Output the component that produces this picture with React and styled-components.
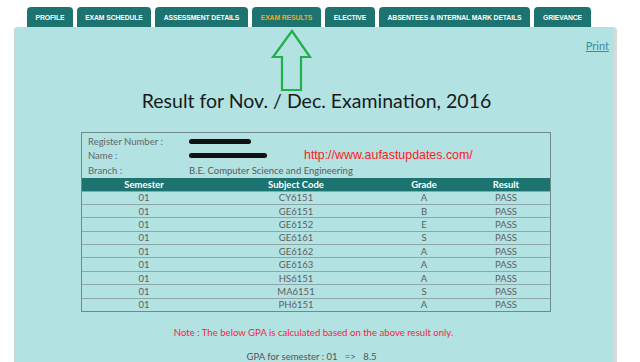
import React from "react";
import styled, { createGlobalStyle } from "styled-components";

const GlobalStyle = createGlobalStyle`
  body {
    margin: 0;
    background: #ffffff;
    font-family: "Lato", "Liberation Sans", sans-serif;
  }
`;

const Page = styled.div`
  width: 640px;
  height: 362px;
  overflow: hidden;
  padding-top: 7px;
  box-sizing: border-box;
`;

const TabBar = styled.div`
  display: flex;
  gap: 4px;
  padding-left: 27px;
  height: 20px;
`;

const Tab = styled.div`
  display: flex;
  align-items: center;
  justify-content: center;
  width: ${(props) => props.w}px;
  background: #1c7370;
  border-radius: 4px 4px 0 0;
  color: ${(props) => (props.active ? "#f5a623" : "#ffffff")};
  font-family: "Liberation Sans", Arial, sans-serif;
  font-weight: bold;
  font-size: 6.8px;
  letter-spacing: -0.1px;
`;

const Panel = styled.div`
  position: relative;
  margin-left: 14px;
  width: 600px;
  height: 340px;
  background: #b2e2e2;
  border-radius: 4px 4px 0 0;
  border-left: 1px solid #c8d4d4;
  box-shadow: 3px 0 0 #d6dada;
  padding-top: 12px;
  box-sizing: border-box;
`;

const PrintRow = styled.div`
  display: flex;
  justify-content: flex-end;
  padding-right: 5px;
`;

const PrintLink = styled.a`
  color: #3a8c9c;
  font-size: 11px;
  text-decoration: underline;
  cursor: pointer;
`;

const Arrow = styled.svg`
  position: absolute;
  left: 255px;
  top: 2px;
`;

const Title = styled.h1`
  margin: 37px 0 0;
  text-align: center;
  font-weight: normal;
  font-size: 19.5px;
  color: #1a1a1a;
  padding-left: 4px;
`;

const ResultBox = styled.div`
  position: relative;
  width: 468px;
  margin: 20px 0 0 66px;
  border: 1px solid #6f8a8a;
  font-size: 9.5px;
  color: #5a5a5a;
`;

const InfoGrid = styled.div`
  display: grid;
  grid-template-columns: 101px 1fr;
  grid-auto-rows: 14.5px;
  align-items: center;
  padding: 1px 0 0 6px;
`;

const Label = styled.div`
  color: #666;
`;

const Redacted = styled.div`
  width: ${(props) => props.w}px;
  height: 5px;
  background: #111;
  border-radius: 3px;
`;

const Watermark = styled.div`
  position: absolute;
  left: 222px;
  top: 15px;
  color: #ff1a1a;
  font-family: "Liberation Sans", Arial, sans-serif;
  font-size: 12.4px;
`;

const Row = styled.div`
  display: grid;
  grid-template-columns: 124px 180px 76px 88px;
  height: ${(props) => (props.head ? 13 : 13.4)}px;
  align-items: center;
  text-align: center;
  background: ${(props) => (props.head ? "#1c7370" : "transparent")};
  color: ${(props) => (props.head ? "#ffffff" : "#5e5e5e")};
  font-weight: ${(props) => (props.head ? "bold" : "normal")};
  border-top: ${(props) => (props.head ? "none" : "1px solid #8fa6a6")};
  box-sizing: border-box;
`;

const Note = styled.div`
  margin-top: 15px;
  text-align: center;
  color: #ff1a3a;
  font-size: 9.6px;
  padding-right: 2px;
`;

const Gpa = styled.div`
  margin-top: 13px;
  text-align: center;
  color: #555;
  font-size: 9.5px;
  line-height: 11px;
  padding-right: 6px;
  white-space: pre;
`;

const tabs = [
  { label: "PROFILE", w: 46 },
  { label: "EXAM SCHEDULE", w: 74 },
  { label: "ASSESSMENT DETAILS", w: 93 },
  { label: "EXAM RESULTS", w: 69, active: true },
  { label: "ELECTIVE", w: 50 },
  { label: "ABSENTEES & INTERNAL MARK DETAILS", w: 151 },
  { label: "GRIEVANCE", w: 57 },
];

const results = [
  ["01", "CY6151", "A", "PASS"],
  ["01", "GE6151", "B", "PASS"],
  ["01", "GE6152", "E", "PASS"],
  ["01", "GE6161", "S", "PASS"],
  ["01", "GE6162", "A", "PASS"],
  ["01", "GE6163", "A", "PASS"],
  ["01", "HS6151", "A", "PASS"],
  ["01", "MA6151", "S", "PASS"],
  ["01", "PH6151", "A", "PASS"],
];

const App = () => {
  return (
    <Page>
      <GlobalStyle />
      <TabBar>
        {tabs.map((t) => (
          <Tab key={t.label} w={t.w} active={t.active}>
            {t.label}
          </Tab>
        ))}
      </TabBar>
      <Panel>
        <PrintRow>
          <PrintLink>Print</PrintLink>
        </PrintRow>
        <Arrow width="44" height="64" viewBox="0 0 44 64">
          <path
            d="M22 2 L40 28 L31 28 L31 61 L12 61 L12 28 L3 28 Z"
            fill="none"
            stroke="#1fb04a"
            strokeWidth="2.2"
            strokeLinejoin="miter"
          />
        </Arrow>
        <Title>Result for Nov. / Dec. Examination, 2016</Title>
        <ResultBox>
          <InfoGrid>
            <Label>Register Number :</Label>
            <Redacted w={62} />
            <Label>Name :</Label>
            <Redacted w={78} />
            <Label>Branch :</Label>
            <div>B.E. Computer Science and Engineering</div>
          </InfoGrid>
          <Watermark>http://www.aufastupdates.com/</Watermark>
          <Row head>
            <div>Semester</div>
            <div>Subject Code</div>
            <div>Grade</div>
            <div>Result</div>
          </Row>
          {results.map((r) => (
            <Row key={r[1]}>
              {r.map((c, i) => (
                <div key={i}>{c}</div>
              ))}
            </Row>
          ))}
        </ResultBox>
        <Note>Note : The below GPA is calculated based on the above result only.</Note>
        <Gpa>GPA for semester : 01   =>   8.5</Gpa>
      </Panel>
    </Page>
  );
};

export default App;
